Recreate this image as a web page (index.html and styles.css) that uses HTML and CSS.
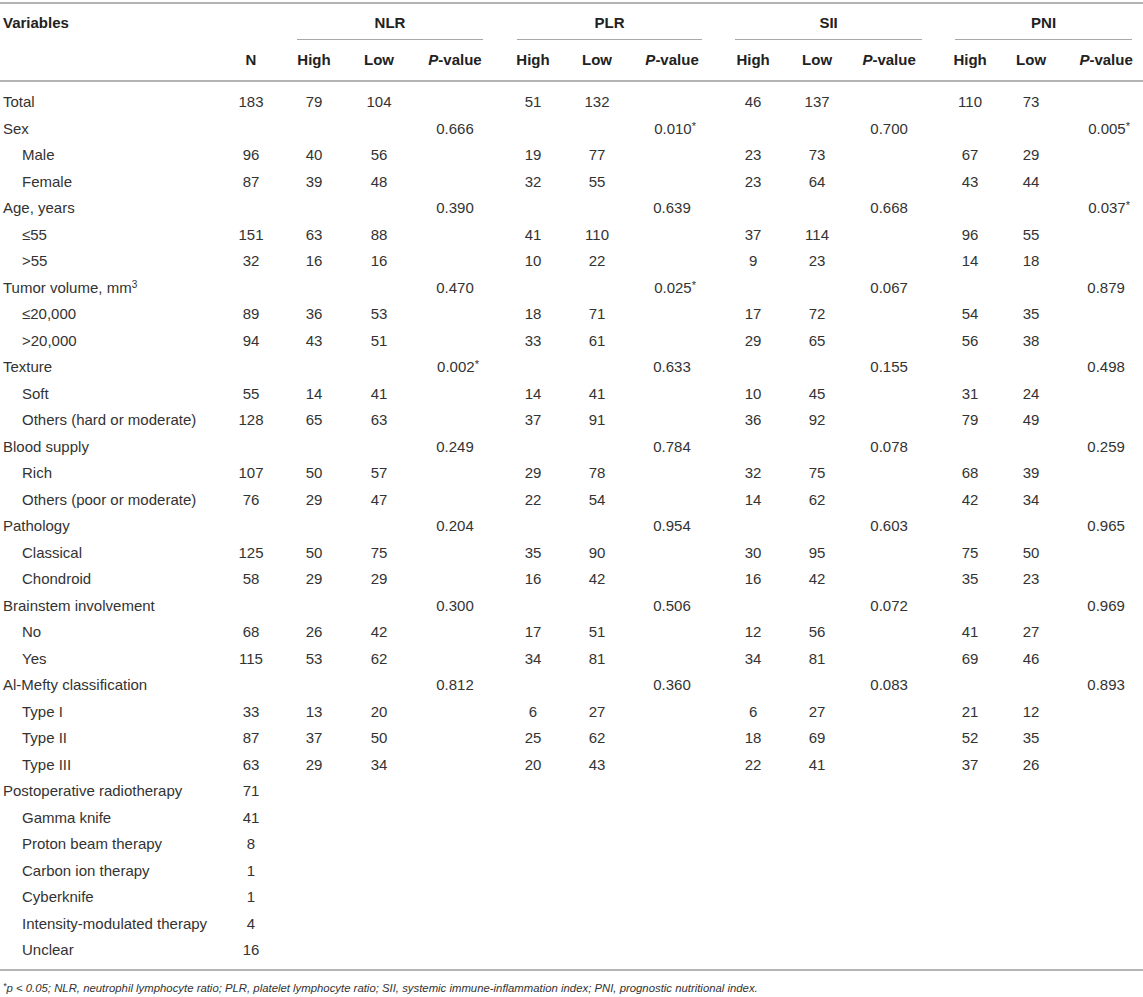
FILE: index.html
```html
<!DOCTYPE html>
<html lang="en">
<head>
<meta charset="utf-8">
<title>Table</title>
<link rel="stylesheet" href="styles.css">
</head>
<body>
<table class="tbl">
  <colgroup>
    <col class="w-var"><col class="w-n">
    <col class="w-h1"><col class="w-l1"><col class="w-p1">
    <col class="w-h2"><col class="w-l2"><col class="w-p2">
    <col class="w-h3"><col class="w-l3"><col class="w-p3">
    <col class="w-h4"><col class="w-l4"><col class="w-p4">
  </colgroup>
  <thead>
    <tr class="hr1">
      <th class="first"><div class="vh">Variables</div></th>
      <th></th>
      <th colspan="3"><div class="grp g1">NLR</div></th>
      <th colspan="3"><div class="grp g2">PLR</div></th>
      <th colspan="3"><div class="grp g3">SII</div></th>
      <th colspan="3"><div class="grp g4">PNI</div></th>
    </tr>
    <tr class="hr2">
      <th class="first"></th>
      <th>N</th>
      <th>High</th><th>Low</th><th><i>P</i>-value</th>
      <th>High</th><th>Low</th><th><i>P</i>-value</th>
      <th>High</th><th>Low</th><th><i>P</i>-value</th>
      <th>High</th><th>Low</th><th class="last"><i>P</i>-value</th>
    </tr>
  </thead>
  <tbody>
    <tr><td class="first">Total</td><td>183</td><td>79</td><td>104</td><td></td><td>51</td><td>132</td><td></td><td>46</td><td>137</td><td></td><td>110</td><td>73</td><td class="last"></td></tr>
    <tr><td class="first">Sex</td><td></td><td></td><td></td><td>0.666</td><td></td><td></td><td>0.010<sup>*</sup></td><td></td><td></td><td>0.700</td><td></td><td></td><td class="last">0.005<sup>*</sup></td></tr>
    <tr><td class="first ind">Male</td><td>96</td><td>40</td><td>56</td><td></td><td>19</td><td>77</td><td></td><td>23</td><td>73</td><td></td><td>67</td><td>29</td><td class="last"></td></tr>
    <tr><td class="first ind">Female</td><td>87</td><td>39</td><td>48</td><td></td><td>32</td><td>55</td><td></td><td>23</td><td>64</td><td></td><td>43</td><td>44</td><td class="last"></td></tr>
    <tr><td class="first">Age, years</td><td></td><td></td><td></td><td>0.390</td><td></td><td></td><td>0.639</td><td></td><td></td><td>0.668</td><td></td><td></td><td class="last">0.037<sup>*</sup></td></tr>
    <tr><td class="first ind">≤55</td><td>151</td><td>63</td><td>88</td><td></td><td>41</td><td>110</td><td></td><td>37</td><td>114</td><td></td><td>96</td><td>55</td><td class="last"></td></tr>
    <tr><td class="first ind">&gt;55</td><td>32</td><td>16</td><td>16</td><td></td><td>10</td><td>22</td><td></td><td>9</td><td>23</td><td></td><td>14</td><td>18</td><td class="last"></td></tr>
    <tr><td class="first">Tumor volume, mm<sup class="exp">3</sup></td><td></td><td></td><td></td><td>0.470</td><td></td><td></td><td>0.025<sup>*</sup></td><td></td><td></td><td>0.067</td><td></td><td></td><td class="last">0.879</td></tr>
    <tr><td class="first ind">≤20,000</td><td>89</td><td>36</td><td>53</td><td></td><td>18</td><td>71</td><td></td><td>17</td><td>72</td><td></td><td>54</td><td>35</td><td class="last"></td></tr>
    <tr><td class="first ind">&gt;20,000</td><td>94</td><td>43</td><td>51</td><td></td><td>33</td><td>61</td><td></td><td>29</td><td>65</td><td></td><td>56</td><td>38</td><td class="last"></td></tr>
    <tr><td class="first">Texture</td><td></td><td></td><td></td><td>0.002<sup>*</sup></td><td></td><td></td><td>0.633</td><td></td><td></td><td>0.155</td><td></td><td></td><td class="last">0.498</td></tr>
    <tr><td class="first ind">Soft</td><td>55</td><td>14</td><td>41</td><td></td><td>14</td><td>41</td><td></td><td>10</td><td>45</td><td></td><td>31</td><td>24</td><td class="last"></td></tr>
    <tr><td class="first ind">Others (hard or moderate)</td><td>128</td><td>65</td><td>63</td><td></td><td>37</td><td>91</td><td></td><td>36</td><td>92</td><td></td><td>79</td><td>49</td><td class="last"></td></tr>
    <tr><td class="first">Blood supply</td><td></td><td></td><td></td><td>0.249</td><td></td><td></td><td>0.784</td><td></td><td></td><td>0.078</td><td></td><td></td><td class="last">0.259</td></tr>
    <tr><td class="first ind">Rich</td><td>107</td><td>50</td><td>57</td><td></td><td>29</td><td>78</td><td></td><td>32</td><td>75</td><td></td><td>68</td><td>39</td><td class="last"></td></tr>
    <tr><td class="first ind">Others (poor or moderate)</td><td>76</td><td>29</td><td>47</td><td></td><td>22</td><td>54</td><td></td><td>14</td><td>62</td><td></td><td>42</td><td>34</td><td class="last"></td></tr>
    <tr><td class="first">Pathology</td><td></td><td></td><td></td><td>0.204</td><td></td><td></td><td>0.954</td><td></td><td></td><td>0.603</td><td></td><td></td><td class="last">0.965</td></tr>
    <tr><td class="first ind">Classical</td><td>125</td><td>50</td><td>75</td><td></td><td>35</td><td>90</td><td></td><td>30</td><td>95</td><td></td><td>75</td><td>50</td><td class="last"></td></tr>
    <tr><td class="first ind">Chondroid</td><td>58</td><td>29</td><td>29</td><td></td><td>16</td><td>42</td><td></td><td>16</td><td>42</td><td></td><td>35</td><td>23</td><td class="last"></td></tr>
    <tr><td class="first">Brainstem involvement</td><td></td><td></td><td></td><td>0.300</td><td></td><td></td><td>0.506</td><td></td><td></td><td>0.072</td><td></td><td></td><td class="last">0.969</td></tr>
    <tr><td class="first ind">No</td><td>68</td><td>26</td><td>42</td><td></td><td>17</td><td>51</td><td></td><td>12</td><td>56</td><td></td><td>41</td><td>27</td><td class="last"></td></tr>
    <tr><td class="first ind">Yes</td><td>115</td><td>53</td><td>62</td><td></td><td>34</td><td>81</td><td></td><td>34</td><td>81</td><td></td><td>69</td><td>46</td><td class="last"></td></tr>
    <tr><td class="first">Al-Mefty classification</td><td></td><td></td><td></td><td>0.812</td><td></td><td></td><td>0.360</td><td></td><td></td><td>0.083</td><td></td><td></td><td class="last">0.893</td></tr>
    <tr><td class="first ind">Type I</td><td>33</td><td>13</td><td>20</td><td></td><td>6</td><td>27</td><td></td><td>6</td><td>27</td><td></td><td>21</td><td>12</td><td class="last"></td></tr>
    <tr><td class="first ind">Type II</td><td>87</td><td>37</td><td>50</td><td></td><td>25</td><td>62</td><td></td><td>18</td><td>69</td><td></td><td>52</td><td>35</td><td class="last"></td></tr>
    <tr><td class="first ind">Type III</td><td>63</td><td>29</td><td>34</td><td></td><td>20</td><td>43</td><td></td><td>22</td><td>41</td><td></td><td>37</td><td>26</td><td class="last"></td></tr>
    <tr><td class="first">Postoperative radiotherapy</td><td>71</td><td></td><td></td><td></td><td></td><td></td><td></td><td></td><td></td><td></td><td></td><td></td><td class="last"></td></tr>
    <tr><td class="first ind">Gamma knife</td><td>41</td><td></td><td></td><td></td><td></td><td></td><td></td><td></td><td></td><td></td><td></td><td></td><td class="last"></td></tr>
    <tr><td class="first ind">Proton beam therapy</td><td>8</td><td></td><td></td><td></td><td></td><td></td><td></td><td></td><td></td><td></td><td></td><td></td><td class="last"></td></tr>
    <tr><td class="first ind">Carbon ion therapy</td><td>1</td><td></td><td></td><td></td><td></td><td></td><td></td><td></td><td></td><td></td><td></td><td></td><td class="last"></td></tr>
    <tr><td class="first ind">Cyberknife</td><td>1</td><td></td><td></td><td></td><td></td><td></td><td></td><td></td><td></td><td></td><td></td><td></td><td class="last"></td></tr>
    <tr><td class="first ind">Intensity-modulated therapy</td><td>4</td><td></td><td></td><td></td><td></td><td></td><td></td><td></td><td></td><td></td><td></td><td></td><td class="last"></td></tr>
    <tr><td class="first ind">Unclear</td><td>16</td><td></td><td></td><td></td><td></td><td></td><td></td><td></td><td></td><td></td><td></td><td></td><td class="last"></td></tr>
  </tbody>
</table>
<p class="note"><sup>*</sup>p &lt; 0.05; NLR, neutrophil lymphocyte ratio; PLR, platelet lymphocyte ratio; SII, systemic immune-inflammation index; PNI, prognostic nutritional index.</p>
</body>
</html>
```

FILE: styles.css
```css
html, body {
  margin: 0;
  padding: 0;
  background: #ffffff;
}
body {
  font-family: "Liberation Sans", Arial, Helvetica, sans-serif;
  color: #333333;
}
.tbl {
  width: 1143px;
  table-layout: fixed;
  border-collapse: separate;
  border-spacing: 0;
  margin-top: 2px;
  border-top: 2px solid #b4b4b4;
  font-size: 15px;
}
.w-var { width: 220px; }
.w-n { width: 62px; }
.w-h1 { width: 64px; }
.w-l1 { width: 66px; }
.w-p1 { width: 86px; }
.w-h2 { width: 70px; }
.w-l2 { width: 58px; }
.w-p2 { width: 92px; }
.w-h3 { width: 70px; }
.w-l3 { width: 58px; }
.w-p3 { width: 86px; }
.w-h4 { width: 76px; }
.w-l4 { width: 46px; }
.w-p4 { width: 89px; }

th, td {
  padding: 0;
  text-align: center;
  white-space: nowrap;
}
th {
  font-weight: bold;
  color: #222222;
  vertical-align: top;
}
.first {
  text-align: left;
  padding-left: 3px;
}
td.ind {
  padding-left: 22px;
}
.last {
  padding-left: 15px;
}
.vh {
  padding-top: 10px;
  line-height: 18px;
}
.grp {
  padding: 10px 0 7px;
  line-height: 18px;
  border-bottom: 1px solid #a8a8a8;
}
.g1 { margin: 0 15px 0 15px; }
.g2 { margin: 0 16px 0 19px; }
.g3 { margin: 0 10px 0 17px; }
.g4 { margin: 0 11px 0 23px; }

.hr2 th {
  padding-top: 11px;
  padding-bottom: 11px;
  line-height: 18px;
  border-bottom: 2px solid #b4b4b4;
}
.hr2 th.first { padding-left: 3px; }
.hr2 th.last { padding-left: 15px; }

td {
  line-height: 26.5px;
  vertical-align: middle;
}
tbody tr:first-child td {
  padding-top: 7px;
}
tbody tr:last-child td {
  padding-bottom: 5.5px;
  border-bottom: 2px solid #b4b4b4;
}
td sup {
  font-size: 11px;
  line-height: 0;
  vertical-align: 4px;
  margin-right: -6px;
}
td sup.exp {
  font-size: 10px;
  vertical-align: 5px;
  margin-right: 0;
}
.note {
  margin: 9px 0 0;
  padding-left: 3px;
  font-size: 11.35px;
  line-height: 16px;
  font-style: italic;
  color: #333333;
}
.note sup {
  font-size: 9px;
  line-height: 0;
  vertical-align: 3px;
}
```
